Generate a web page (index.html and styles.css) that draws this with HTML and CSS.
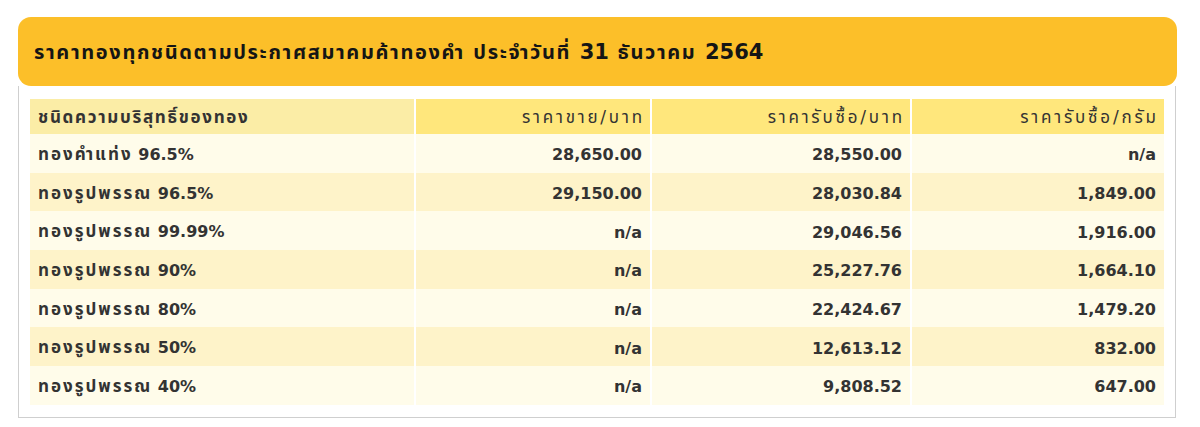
FILE: index.html
```html
<!DOCTYPE html>
<html lang="th">
<head>
<meta charset="utf-8">
<title>ราคาทอง</title>
<link rel="stylesheet" href="styles.css">
</head>
<body>
<div class="wrap">
  <div class="title-bar">
    <h1 class="title">ราคาทองทุกชนิดตามประกาศสมาคมค้าทองคำ ประจำวันที่ <span class="digits">31</span> ธันวาคม <span class="digits">2564</span></h1>
  </div>
  <div class="panel">
    <table class="prices">
      <thead>
        <tr>
          <th class="c-name"><span class="th">ชนิดความบริสุทธิ์ของทอง</span></th>
          <th class="c-num"><span class="th">ราคาขาย/บาท</span></th>
          <th class="c-num"><span class="th">ราคารับซื้อ/บาท</span></th>
          <th class="c-num"><span class="th">ราคารับซื้อ/กรัม</span></th>
        </tr>
      </thead>
      <tbody>
        <tr><td><span class="th">ทองคำแท่ง</span> 96.5%</td><td class="num">28,650.00</td><td class="num">28,550.00</td><td class="num">n/a</td></tr>
        <tr><td><span class="th">ทองรูปพรรณ</span> 96.5%</td><td class="num">29,150.00</td><td class="num">28,030.84</td><td class="num">1,849.00</td></tr>
        <tr><td><span class="th">ทองรูปพรรณ</span> 99.99%</td><td class="num">n/a</td><td class="num">29,046.56</td><td class="num">1,916.00</td></tr>
        <tr><td><span class="th">ทองรูปพรรณ</span> 90%</td><td class="num">n/a</td><td class="num">25,227.76</td><td class="num">1,664.10</td></tr>
        <tr><td><span class="th">ทองรูปพรรณ</span> 80%</td><td class="num">n/a</td><td class="num">22,424.67</td><td class="num">1,479.20</td></tr>
        <tr><td><span class="th">ทองรูปพรรณ</span> 50%</td><td class="num">n/a</td><td class="num">12,613.12</td><td class="num">832.00</td></tr>
        <tr><td><span class="th">ทองรูปพรรณ</span> 40%</td><td class="num">n/a</td><td class="num">9,808.52</td><td class="num">647.00</td></tr>
      </tbody>
    </table>
  </div>
</div>
</body>
</html>
```

FILE: styles.css
```css
html, body {
  margin: 0;
  padding: 0;
  background: #ffffff;
}

body {
  font-family: "DejaVu Sans", "Noto Sans Thai", "Noto Sans", Tahoma, sans-serif;
  color: #333333;
}

.wrap {
  width: 1159px;
  margin: 17px 0 0 18px;
}

.title-bar {
  background: #fcbf29;
  border-radius: 13px;
  height: 69px;
  display: flex;
  align-items: center;
  padding: 2px 16px 0 16px;
  box-sizing: border-box;
}

.title {
  margin: 0;
  font-size: 20px;
  font-weight: bold;
  letter-spacing: 1.65px;
  color: #151515;
}

.title .digits {
  font-size: 21px;
  letter-spacing: 0;
}

.panel {
  border: 1px solid #cfcfcf;
  border-top: none;
  width: 1158px;
  box-sizing: border-box;
  padding: 13px 9px 12px 9px;
}

.prices {
  width: 100%;
  border-collapse: separate;
  border-spacing: 2px 0;
  font-size: 16px;
}

.prices th,
.prices td {
  padding: 3px 8px 0 8px;
  white-space: nowrap;
}

.prices .th {
  font-size: 17px;
  letter-spacing: 2px;
}

.prices th {
  height: 32px;
  background: #ffe77c;
  font-weight: normal;
  color: #333333;
  text-align: right;
}

.prices th .th {
  letter-spacing: 2.8px;
  margin-right: -2.8px;
}

.prices th.c-name {
  text-align: left;
  font-weight: bold;
  background: #fbeda6;
  width: 368px;
}

.prices th.c-name .th {
  letter-spacing: 1.7px;
}

.prices th.c-num:nth-child(2) { width: 218px; }
.prices th.c-num:nth-child(3) { width: 242px; }

.prices td {
  height: 35.7px;
  font-weight: bold;
  color: #333333;
}

.prices tbody tr:nth-child(odd) td { background: #fffcea; }
.prices tbody tr:nth-child(even) td { background: #fef3c9; }

.prices td.num { text-align: right; }
```
